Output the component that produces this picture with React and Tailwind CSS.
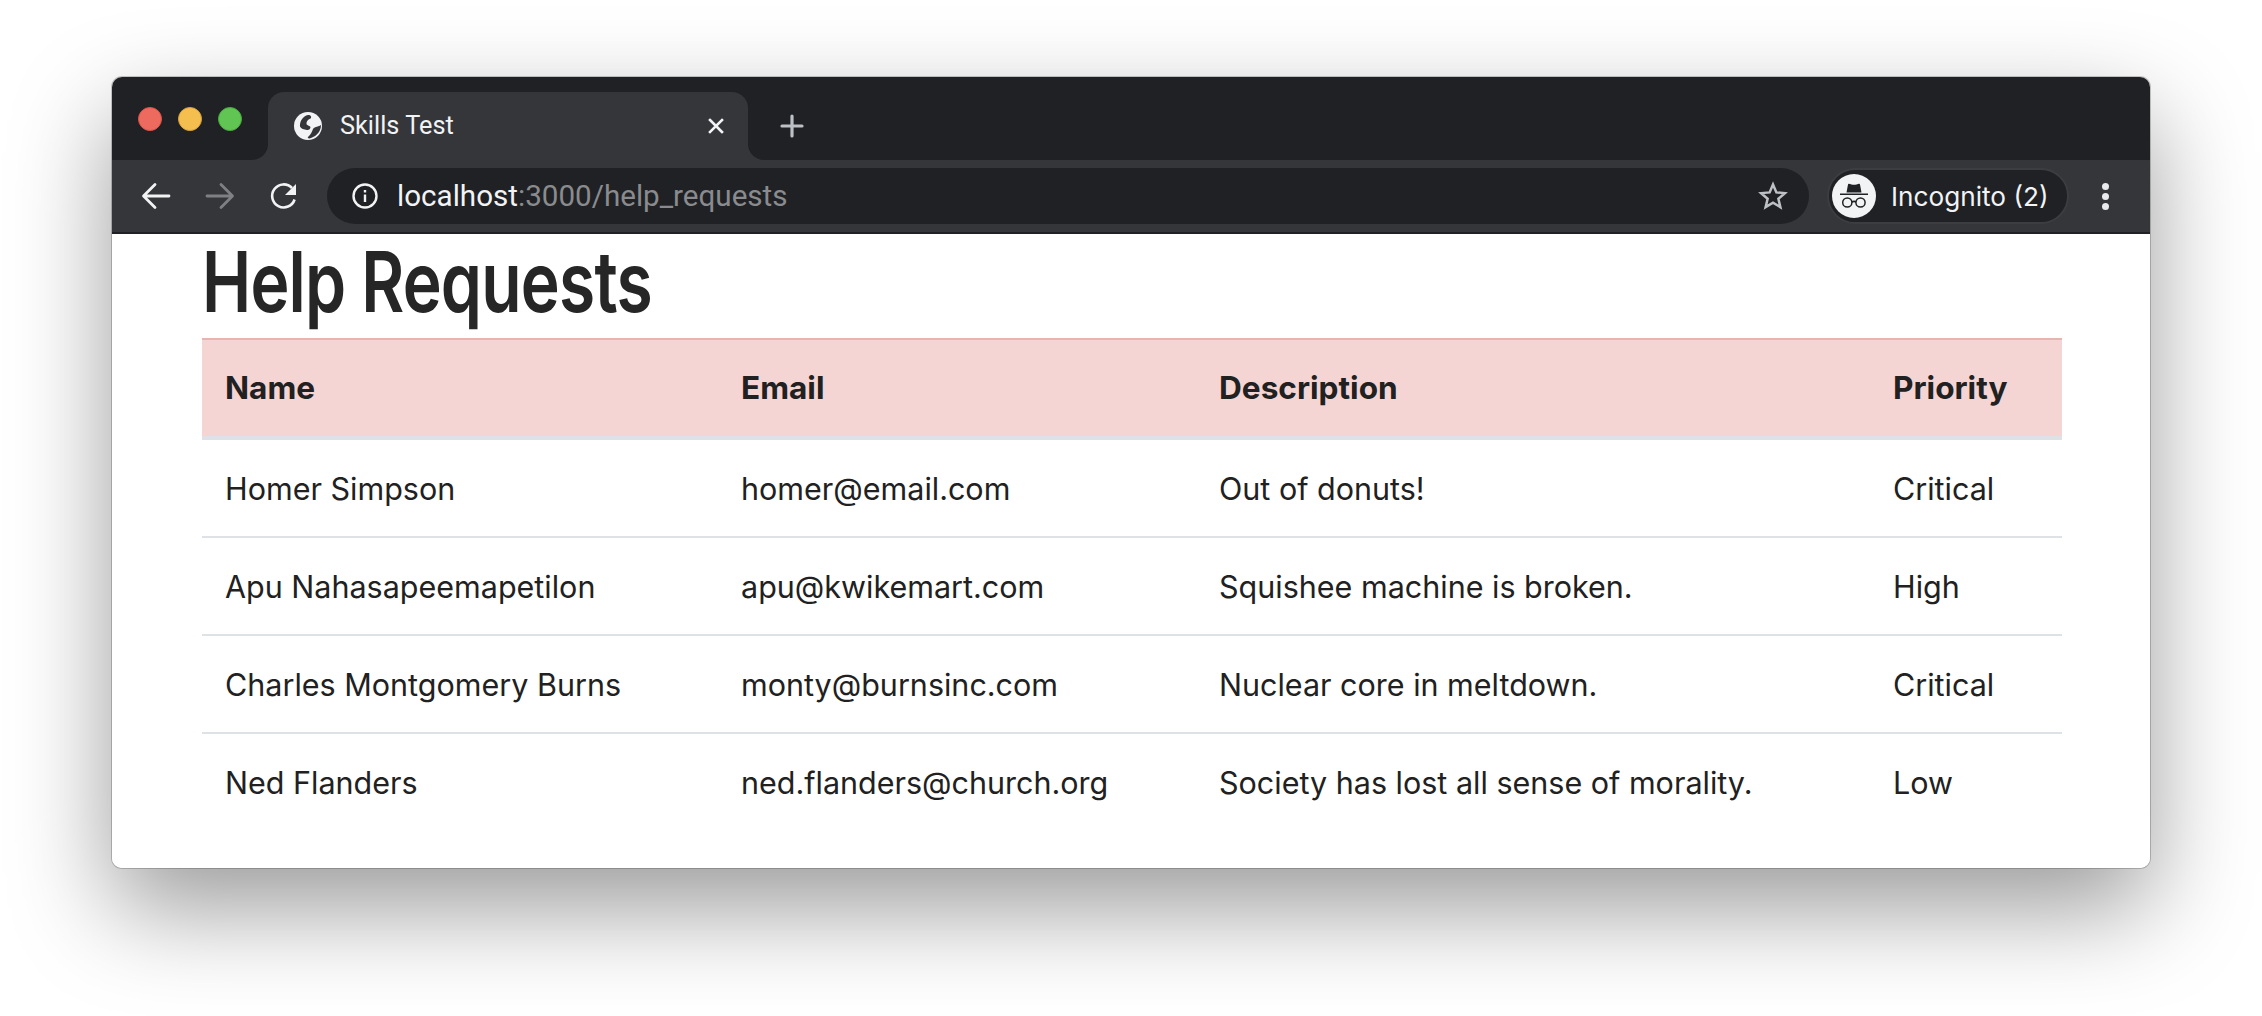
import React from "react";

const rows = [
  ["Homer Simpson", "homer@email.com", "Out of donuts!", "Critical"],
  ["Apu Nahasapeemapetilon", "apu@kwikemart.com", "Squishee machine is broken.", "High"],
  ["Charles Montgomery Burns", "monty@burnsinc.com", "Nuclear core in meltdown.", "Critical"],
  ["Ned Flanders", "ned.flanders@church.org", "Society has lost all sense of morality.", "Low"],
];

function Globe() {
  return (
    <svg width="28" height="28" viewBox="0 0 28 28">
      <circle cx="14" cy="14" r="14" fill="#f1f3f4" />
      <path d="M6 15C5.500 9 9 4 14 3c3 0 4 2 2.500 3.500-3 1-4 3-4 5 0 2 3 2 4 3.500 0 2-2 3.500-3.500 3-3-.5-6-1-7-3.500z" fill="#35363a" />
      <path d="M27 13c-2 2-6 1-8 4-1 3-2 5-5 8-1 1 1 2 3 1 6-2 10-7 10-13z" fill="#35363a" />
    </svg>
  );
}

function Incognito() {
  return (
    <div className="flex h-[44px] w-[44px] items-center justify-center rounded-full bg-[#f1f3f4]">
      <svg width="32" height="32" viewBox="0 0 32 32" fill="none">
        <path d="M8.500 12.500l1.500-8c.1-.6.6-.9 1.100-.7l2.400.6c1.600.4 3.400.4 5 0l2.400-.6c.5-.2 1-.1 1.100.7l1.500 8z" fill="#202124" />
        <path d="M2 14.200h28" stroke="#202124" strokeWidth="1.600" />
        <circle cx="9.300" cy="22.500" r="4.600" stroke="#202124" strokeWidth="1.500" />
        <circle cx="22.500" cy="22.500" r="4.600" stroke="#202124" strokeWidth="1.500" />
        <path d="M13.800 22c1.400-.8 3-.8 4.400 0" stroke="#202124" strokeWidth="1.500" />
      </svg>
    </div>
  );
}

export default function App() {
  return (
    <div className="h-[1016px] overflow-hidden bg-white pl-[112px] pr-[112px] pt-[77px]">
      <div className="w-[2038px] overflow-hidden rounded-[10px] bg-white shadow-[0_40px_100px_rgba(0,0,0,0.4),0_0_0_1px_rgba(0,0,0,0.2)]">
        {/* Tab strip */}
        <div className="flex h-[83px] items-end bg-[#202124]">
          <div className="flex h-[68px] w-[156px] items-start gap-4 pl-[26px] pt-[15px]">
            <span className="h-6 w-6 shrink-0 rounded-full border border-[#d9534a] bg-[#ed6a5e]" />
            <span className="h-6 w-6 shrink-0 rounded-full border border-[#d6a13f] bg-[#f5bf4f]" />
            <span className="h-6 w-6 shrink-0 rounded-full border border-[#4aa83f] bg-[#61c554]" />
          </div>
          <div className="relative flex h-[68px] w-[480px] items-center rounded-t-[16px] bg-[#35363a] pl-[26px] pr-[24px]">
            <div className="absolute bottom-0 left-[-16px] h-4 w-4 bg-[#35363a]">
              <div className="h-full w-full rounded-br-[16px] bg-[#202124]" />
            </div>
            <div className="absolute bottom-0 right-[-16px] h-4 w-4 bg-[#35363a]">
              <div className="h-full w-full rounded-bl-[16px] bg-[#202124]" />
            </div>
            <Globe />
            <span className="ml-[18px] flex-1 font-['Roboto',sans-serif] text-[25.300px] text-[#f1f3f4]">Skills Test</span>
            <svg width="16" height="16" viewBox="0 0 16 16" stroke="#f1f3f4" strokeWidth="2.600" strokeLinecap="square">
              <path d="M2 2l12 12M14 2L2 14" />
            </svg>
          </div>
          <div className="flex h-[68px] items-center pl-[32px]">
            <svg width="24" height="24" viewBox="0 0 24 24" stroke="#bdc1c6" strokeWidth="3.200" strokeLinecap="round">
              <path d="M12 2v20M2 12h20" />
            </svg>
          </div>
        </div>
        {/* Toolbar */}
        <div className="flex h-[74px] items-start border-b-2 border-[#202124] bg-[#35363a] pt-2">
          <div className="flex h-[56px] w-[215px] shrink-0 items-center">
            <svg className="ml-[28px]" width="32" height="32" viewBox="0 0 32 32" fill="none" stroke="#f1f3f4" strokeWidth="2.800" strokeLinecap="round" strokeLinejoin="round">
              <path d="M29 16H4M15 4.500L3.500 16 15 27.500" />
            </svg>
            <svg className="ml-[32px]" width="32" height="32" viewBox="0 0 32 32" fill="none" stroke="#7f8083" strokeWidth="2.800" strokeLinecap="round" strokeLinejoin="round">
              <path d="M3 16h25M17 4.500L28.500 16 17 27.500" />
            </svg>
            <svg className="ml-[32px]" width="32" height="32" viewBox="0 0 32 32" fill="none">
              <path d="M26.600 19.500A11.500 11.500 0 1 1 24 8" stroke="#f1f3f4" strokeWidth="2.600" />
              <path d="M28 4v11H17z" fill="#f1f3f4" />
            </svg>
          </div>
          <div className="flex h-[56px] w-[1482px] shrink-0 items-center rounded-full bg-[#202124] pl-[25px] pr-[21px]">
            <svg width="26" height="26" viewBox="0 0 26 26" fill="none" stroke="#f1f3f4" strokeWidth="2.400">
              <circle cx="13" cy="13" r="11.500" />
              <path d="M13 11.500V19M13 7v2.500" />
            </svg>
            <span className="ml-[19px] flex-1 font-['Roboto',sans-serif] text-[29.600px] text-[#f1f3f4]">
              localhost<span className="text-[#8a8b8e]">:3000/help_requests</span>
            </span>
            <svg width="30" height="30" viewBox="0 0 24 24" fill="none" stroke="#bdc1c6" strokeWidth="2" strokeLinejoin="miter">
              <path d="M12 2.800l2.700 6.300 6.800.6-5.200 4.500 1.600 6.700L12 17.300l-5.900 3.600 1.600-6.700-5.200-4.500 6.800-.6z" />
            </svg>
          </div>
          <div className="ml-[18px] flex h-[56px] w-[242px] shrink-0 items-center rounded-full border-2 border-[#3c3d41] bg-[#202124] pl-[3px]">
            <Incognito />
            <span className="ml-[15px] pt-[2px] font-['Inter',sans-serif] text-[26.200px] text-[#f1f3f4]">Incognito (2)</span>
          </div>
          <div className="ml-[33px] flex h-[56px] flex-col items-center justify-center gap-[3px]">
            <span className="h-[7px] w-[7px] rounded-full bg-[#e8eaed]" />
            <span className="h-[7px] w-[7px] rounded-full bg-[#e8eaed]" />
            <span className="h-[7px] w-[7px] rounded-full bg-[#e8eaed]" />
          </div>
        </div>
        {/* Page */}
        <div className="bg-white px-[90px] pb-[36px] text-[#212121]">
          <h1 className="h-[104px] pt-[4px] font-['Inter',sans-serif] text-[84px] font-semibold leading-[88px] tracking-[-1px] text-[#262626]">
            <span className="inline-block origin-left scale-x-[0.785] whitespace-nowrap">Help Requests</span>
          </h1>
          <table className="w-[1860px] table-fixed border-separate border-spacing-0 font-['Inter',sans-serif] text-[30.500px]">
            <colgroup>
              <col className="w-[516px]" />
              <col className="w-[478px]" />
              <col className="w-[674px]" />
              <col className="w-[192px]" />
            </colgroup>
            <thead>
              <tr className="bg-[#f4d5d3] text-[31.600px]">
                {["Name", "Email", "Description", "Priority"].map((h) => (
                  <th key={h} className="h-[102px] border-t-2 border-b-4 border-t-[#e8b4b0] border-b-[#dee2e6] px-[23px] text-left font-bold">{h}</th>
                ))}
              </tr>
            </thead>
            <tbody>
              {rows.map((r, i) => (
                <tr key={r[0]}>
                  {r.map((c) => (
                    <td key={c} className={i < rows.length - 1 ? "h-[98px] whitespace-nowrap border-b-2 border-[#dee2e6] px-[23px] pt-[2px]" : "h-[98px] whitespace-nowrap px-[23px]"}>{c}</td>
                  ))}
                </tr>
              ))}
            </tbody>
          </table>
        </div>
      </div>
    </div>
  );
}
